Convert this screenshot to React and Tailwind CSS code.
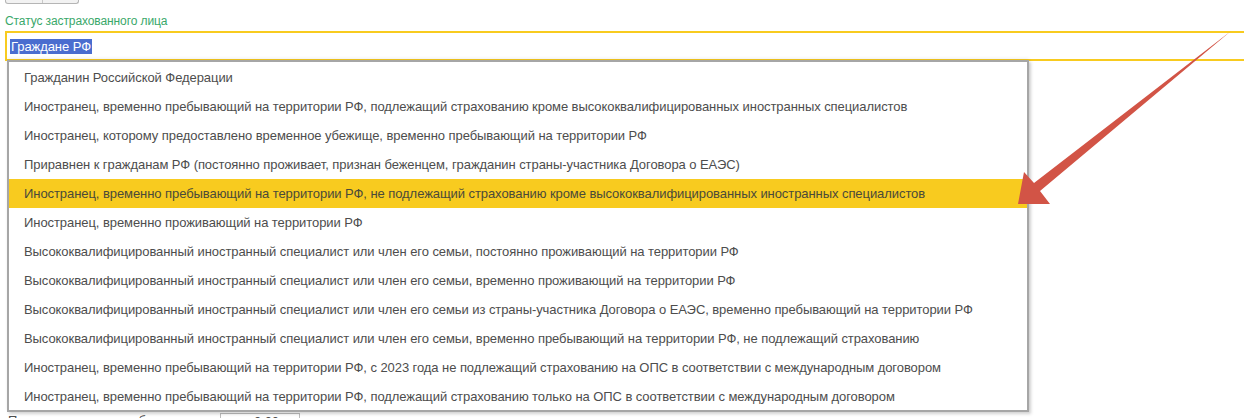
import React from "react";

const items = [
  "Гражданин Российской Федерации",
  "Иностранец, временно пребывающий на территории РФ, подлежащий страхованию кроме высококвалифицированных иностранных специалистов",
  "Иностранец, которому предоставлено временное убежище, временно пребывающий на территории РФ",
  "Приравнен к гражданам РФ (постоянно проживает, признан беженцем, гражданин страны-участника Договора о ЕАЭС)",
  "Иностранец, временно пребывающий на территории РФ, не подлежащий страхованию кроме высококвалифицированных иностранных специалистов",
  "Иностранец, временно проживающий на территории РФ",
  "Высококвалифицированный иностранный специалист или член его семьи, постоянно проживающий на территории РФ",
  "Высококвалифицированный иностранный специалист или член его семьи, временно проживающий на территории РФ",
  "Высококвалифицированный иностранный специалист или член его семьи из страны-участника Договора о ЕАЭС, временно пребывающий на территории РФ",
  "Высококвалифицированный иностранный специалист или член его семьи, временно пребывающий на территории РФ, не подлежащий страхованию",
  "Иностранец, временно пребывающий на территории РФ, с 2023 года не подлежащий страхованию на ОПС в соответствии с международным договором",
  "Иностранец, временно пребывающий на территории РФ, подлежащий страхованию только на ОПС в соответствии с международным договором",
];

export default function App() {
  return (
    <div className="relative w-[1244px] h-[418px] overflow-hidden bg-white font-['Liberation_Sans',Arial,sans-serif] text-[#4d4d4d]">
      {/* top partial button */}
      <div className="h-[4px] flex">
        <div className="ml-[5px] w-[74px] h-[4px] flex border-x border-b border-[#b5b5b5] rounded-b-[3px] bg-[#f2f2f2]">
          <div className="w-[37px] border-r border-[#c8c8c8]" />
        </div>
      </div>

      {/* label */}
      <div className="mt-[9px] ml-[5px] h-[16px] text-[12px] leading-[16px] text-[#3aa86a] tracking-[-0.1px]">
        Статус застрахованного лица
      </div>

      {/* input */}
      <div className="mt-[2px] ml-[5px] h-[30px] border-y-2 border-l-2 border-[#f8cb1f] flex items-center pl-[3px]">
        <span className="bg-[#4a6dcf] text-white text-[13px] tracking-[-0.07px] leading-[15px] px-[1px]">Граждане РФ</span>
      </div>

      {/* bottom partial row */}
      <div className="mt-[352px] ml-[8px] flex items-start text-[13px] tracking-[-0.07px] leading-[15px] text-[#4d4d4d]">
        <span className="w-[212px]">Период нетрудоспособности:</span>
        <div className="w-[80px] h-[20px] border border-[#bdbdbd] text-right pr-[20px]">0,00</div>
      </div>

      {/* dropdown */}
      <div className="absolute left-[7px] top-[60px] w-[1022px] h-[352px] bg-white border-2 border-[#a6a6a6] shadow-[2px_2px_3px_rgba(0,0,0,0.18),0_-2px_3px_rgba(0,0,0,0.06)] flex flex-col pt-[1px]">
        {items.map((t, i) => (
          <div
            key={i}
            className={
              "h-[29px] shrink-0 flex items-center pl-[15px] text-[13px] tracking-[-0.07px] whitespace-nowrap " +
              (i === 4 ? "bg-[#f8cb1f] text-[#4a4a3a]" : "")
            }
          >
            {t}
          </div>
        ))}
      </div>

      {/* arrow */}
      <svg className="absolute left-0 top-0 pointer-events-none" width="1244" height="418">
        <polygon
          points="1018,204 1024,172 1034,183 1231,31 1040,191 1050,204"
          fill="#d25446"
        />
      </svg>
    </div>
  );
}
